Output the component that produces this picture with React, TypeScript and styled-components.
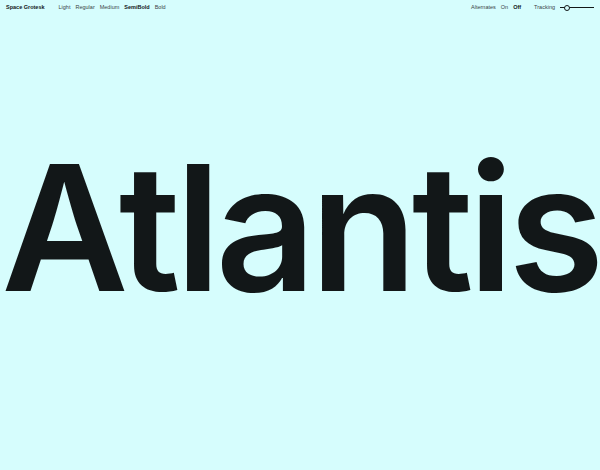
import React from "react";
import styled, { createGlobalStyle } from "styled-components";

const Global = createGlobalStyle`
  html, body { margin: 0; padding: 0; background: #d6fdfd; }
  body { font-family: Inter, "Liberation Sans", sans-serif; color: #121718; }
`;

const Page = styled.div`
  width: 600px;
  height: 470px;
  display: flex;
  flex-direction: column;
  background: #d6fdfd;
  overflow: hidden;
`;

const Bar = styled.header`
  display: flex;
  align-items: center;
  justify-content: space-between;
  height: 14px;
  padding: 0 6px 0 6px;
  font-size: 5.5px;
  font-family: "Liberation Sans", Arial, sans-serif;
`;

const Group = styled.div<{ $gap?: number }>`
  display: flex;
  align-items: center;
  gap: ${(p) => p.$gap ?? 5}px;
`;

const Brand = styled.span`
  font-weight: 700;
  margin-right: 9px;
`;

const Item = styled.span<{ $active?: boolean; $spaced?: boolean }>`
  font-weight: ${(p) => (p.$active ? 700 : 400)};
  color: ${(p) => (p.$active ? "#121718" : "#3a4446")};
  margin-right: ${(p) => (p.$spaced ? 8 : 0)}px;
`;

const Slider = styled.div`
  position: relative;
  width: 34px;
  height: 6px;
  display: flex;
  align-items: center;
`;

const Track = styled.div`
  flex: 1;
  height: 1px;
  background: #121718;
`;

const Knob = styled.div`
  position: absolute;
  left: 4px;
  top: 0.5px;
  width: 4px;
  height: 4px;
  border: 0.8px solid #121718;
  border-radius: 50%;
  background: #d6fdfd;
`;

const Stage = styled.main`
  flex: 1;
  display: flex;
  justify-content: center;
  align-items: flex-start;
`;

const Word = styled.h1`
  margin: 0;
  margin-top: 126px;
  font-family: Inter, "Liberation Sans", sans-serif;
  font-weight: 600;
  font-size: 175px;
  line-height: 1;
  letter-spacing: -5.6px;
  color: #121718;
`;

export default function App() {
  return (
    <Page>
      <Global />
      <Bar>
        <Group $gap={5}>
          <Brand>Space Grotesk</Brand>
          <Item>Light</Item>
          <Item>Regular</Item>
          <Item>Medium</Item>
          <Item $active>SemiBold</Item>
          <Item>Bold</Item>
        </Group>
        <Group $gap={5}>
          <Item>Alternates</Item>
          <Item>On</Item>
          <Item $active $spaced>Off</Item>
          <Item>Tracking</Item>
          <Slider>
            <Track />
            <Knob />
          </Slider>
        </Group>
      </Bar>
      <Stage>
        <Word>Atlantis</Word>
      </Stage>
    </Page>
  );
}
